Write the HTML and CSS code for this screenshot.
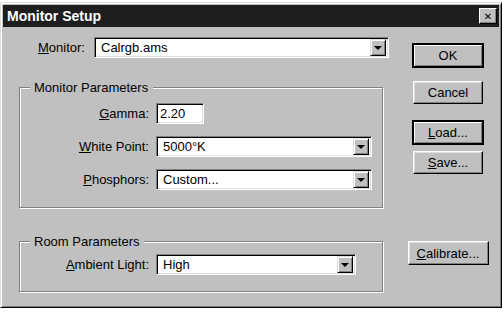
FILE: index.html
```html
<!DOCTYPE html>
<html lang="en">

<head>
    <meta charset="UTF-8">
    <title>Monitor Setup</title>
    <link rel="stylesheet" href="styles.css">
</head>

<body>
    <div class="window">
        <!-- Title Bar -->
        <div class="titlebar">
            <span class="title">Monitor Setup</span>
            <button class="close-btn">&#x2715;</button>
        </div>

        <div class="dialog">
            <!-- Left side: settings -->
            <div class="settings">
                <div class="monitor-row">
                    <label class="monitor-label"><u>M</u>onitor:</label>
                    <div class="combo monitor-combo">
                        <span class="combo-value">Calrgb.ams</span>
                        <span class="combo-arrow"><span class="arrow"></span></span>
                    </div>
                </div>

                <fieldset class="group">
                    <legend>Monitor Parameters</legend>
                    <div class="rows">
                        <label><u>G</u>amma:</label>
                        <div class="field gamma-field">2.20</div>

                        <label><u>W</u>hite Point:</label>
                        <div class="combo wide-combo">
                            <span class="combo-value">5000°K</span>
                            <span class="combo-arrow"><span class="arrow"></span></span>
                        </div>

                        <label><u>P</u>hosphors:</label>
                        <div class="combo wide-combo">
                            <span class="combo-value">Custom...</span>
                            <span class="combo-arrow"><span class="arrow"></span></span>
                        </div>
                    </div>
                </fieldset>

                <fieldset class="group room-group">
                    <legend>Room Parameters</legend>
                    <div class="rows">
                        <label><u>A</u>mbient Light:</label>
                        <div class="combo ambient-combo">
                            <span class="combo-value">High</span>
                            <span class="combo-arrow"><span class="arrow"></span></span>
                        </div>
                    </div>
                </fieldset>
            </div>

            <!-- Right side: buttons -->
            <div class="buttons">
                <button class="btn default ok-btn">OK</button>
                <button class="btn cancel-btn">Cancel</button>
                <button class="btn default load-btn"><u>L</u>oad...</button>
                <button class="btn save-btn"><u>S</u>ave...</button>
                <button class="btn calibrate-btn"><u>C</u>alibrate...</button>
            </div>
        </div>
    </div>
</body>

</html>
```

FILE: styles.css
```css
/* styles.css */
body {
    margin: 0;
    padding: 0;
    background-color: #ffffff;
    font-family: "Liberation Sans", Arial, sans-serif;
    font-size: 13px;
    color: #000000;
}

.window {
    width: 496px;
    height: 300px;
    margin-top: 2px;
    background-color: #c0c0c0;
    border: 1px solid;
    border-color: #dfdfdf #000000 #000000 #dfdfdf;
    box-shadow: inset 1px 1px #ffffff, inset -1px -1px #808080;
    padding: 2px;
}

.titlebar {
    height: 22px;
    background-color: #1e1e1e;
    display: flex;
    justify-content: space-between;
    align-items: center;
    padding-left: 4px;
    padding-right: 2px;
}

.title {
    color: #ffffff;
    font-weight: bold;
    font-size: 14px;
}

.close-btn {
    width: 18px;
    height: 16px;
    padding: 0;
    background-color: #c0c0c0;
    border: 1px solid;
    border-color: #ffffff #000000 #000000 #ffffff;
    box-shadow: inset -1px -1px #808080;
    font-size: 10px;
    font-weight: bold;
    line-height: 13px;
    font-family: "DejaVu Sans", sans-serif;
}

.dialog {
    display: flex;
    padding: 10px 0 0 16px;
}

.settings {
    width: 372px;
}

/* Monitor row */
.monitor-row {
    display: flex;
    align-items: center;
    padding-left: 19px;
}

.monitor-label {
    width: 56px;
}

/* Sunken fields */
.field,
.combo {
    height: 21px;
    box-sizing: border-box;
    background-color: #ffffff;
    border: 1px solid;
    border-color: #808080 #ffffff #ffffff #808080;
    box-shadow: inset 1px 1px #000000, inset -1px -1px #dfdfdf;
    display: flex;
    align-items: center;
}

.field {
    padding-left: 3px;
}

.combo-value {
    flex: 1;
    padding-left: 6px;
}

.combo-arrow {
    width: 16px;
    height: 17px;
    margin-right: 2px;
    box-sizing: border-box;
    background-color: #c0c0c0;
    border: 1px solid;
    border-color: #dfdfdf #000000 #000000 #dfdfdf;
    box-shadow: inset 1px 1px #ffffff, inset -1px -1px #808080;
    display: flex;
    justify-content: center;
    align-items: center;
}

.arrow {
    width: 0;
    height: 0;
    border-left: 4px solid transparent;
    border-right: 4px solid transparent;
    border-top: 4px solid #000000;
    margin-top: 1px;
}

.monitor-combo {
    width: 295px;
}

/* Group boxes */
.group {
    margin: 22px 0 0 0;
    width: 364px;
    box-sizing: border-box;
    padding: 8px 0 17px 0;
    border: 1px solid #808080;
    box-shadow: inset 1px 1px #ffffff, 1px 1px #ffffff;
}

.group legend {
    margin-left: 10px;
    padding: 0 5px 0 4px;
    background-color: #c0c0c0;
}

.room-group {
    margin-top: 26px;
    padding-top: 5px;
    padding-bottom: 16px;
}

.rows {
    display: grid;
    grid-template-columns: 129px auto;
    column-gap: 7px;
    row-gap: 12px;
    align-items: center;
    justify-items: start;
}

.rows label {
    justify-self: end;
}

.gamma-field {
    width: 48px;
}

.wide-combo {
    width: 216px;
}

.ambient-combo {
    width: 200px;
}

/* Buttons */
.buttons {
    display: flex;
    flex-direction: column;
    align-items: center;
    width: 82px;
    margin-left: 16px;
    padding-top: 6px;
}

.btn {
    width: 70px;
    height: 23px;
    padding: 0;
    box-sizing: border-box;
    background-color: #c0c0c0;
    border: 1px solid;
    border-color: #ffffff #000000 #000000 #ffffff;
    box-shadow: inset -1px -1px #808080, inset 1px 1px #dfdfdf;
    font-family: "Liberation Sans", Arial, sans-serif;
    font-size: 13px;
    color: #000000;
}

.btn.default {
    border: 2px solid #000000;
    box-shadow: inset 1px 1px #ffffff, inset -1px -1px #808080;
    height: 25px;
    width: 72px;
}

.cancel-btn {
    margin-top: 13px;
}

.load-btn {
    margin-top: 16px;
}

.save-btn {
    margin-top: 6px;
}

.calibrate-btn {
    width: 81px;
    height: 24px;
    margin-top: 67px;
}
```
